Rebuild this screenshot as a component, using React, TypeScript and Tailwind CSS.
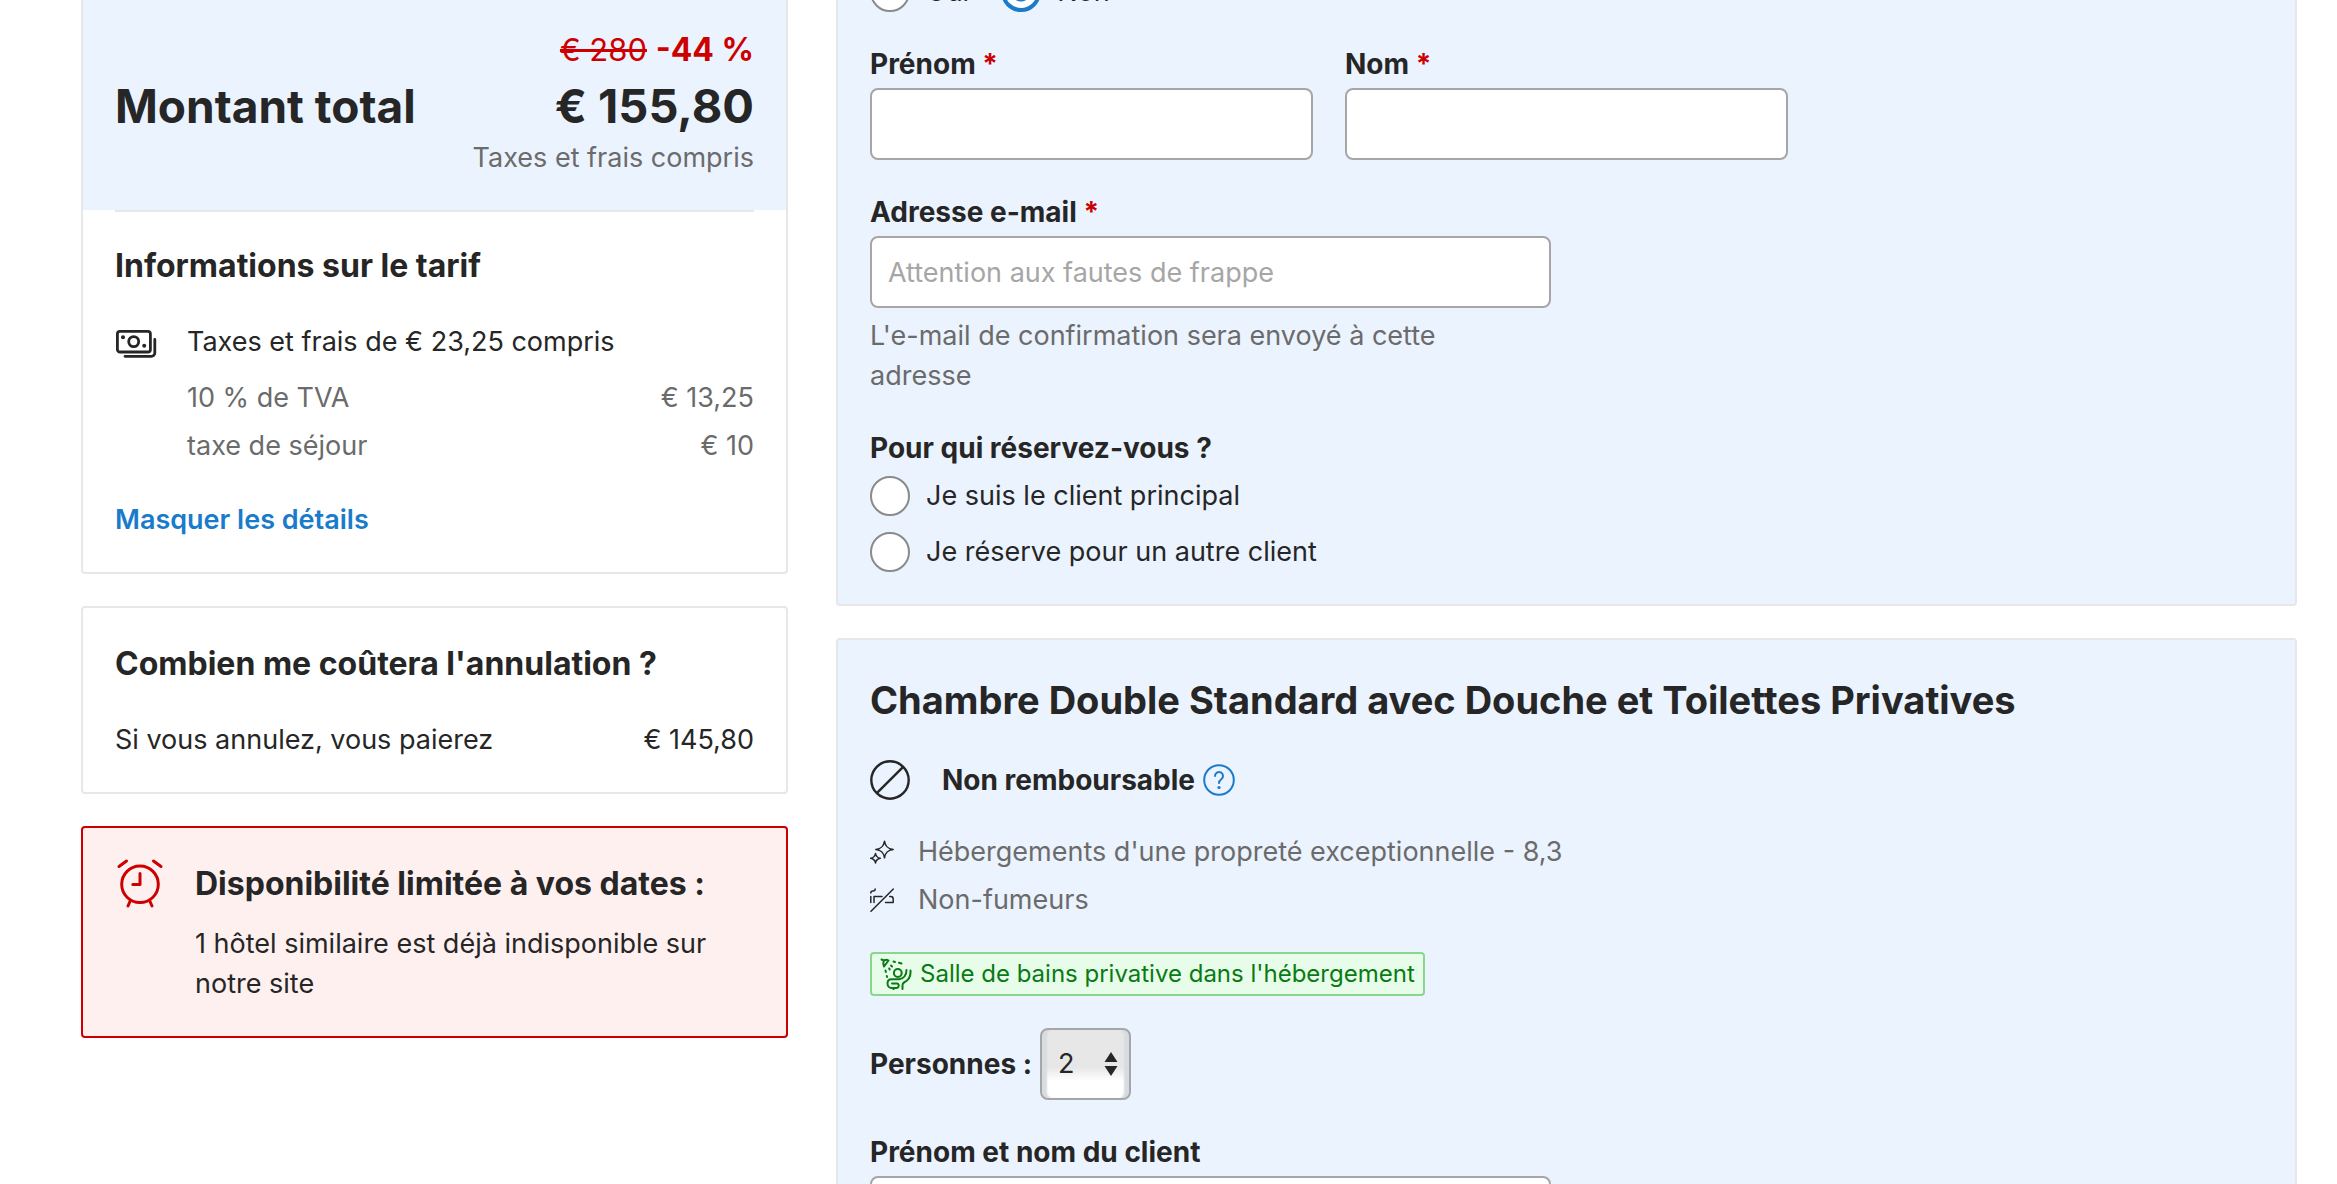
import { useState } from "react";
import type { ReactNode } from "react";

function MoneyIcon() {
    return (
        <svg className="size-10 shrink-0 overflow-visible" viewBox="0 0 40 40" fill="none" stroke="currentColor" strokeWidth="2.8" strokeLinecap="round" strokeLinejoin="round">
            <rect x="2.4" y="9.4" width="33" height="20.6" rx="2.6" />
            <circle cx="18.7" cy="19.6" r="5" />
            <path d="M39.8 17.5V31a3.3 3.3 0 0 1-3.3 3.3H10" />
            <circle cx="8" cy="15.2" r="2" fill="currentColor" stroke="none" />
            <circle cx="29.2" cy="23.8" r="2" fill="currentColor" stroke="none" />
        </svg>
    );
}

function AlarmIcon() {
    return (
        <svg className="size-12 shrink-0 overflow-visible" viewBox="0 0 48 48" fill="none" stroke="#cc0000" strokeWidth="3" strokeLinecap="round" strokeLinejoin="round">
            <circle cx="25" cy="24.3" r="18.3" />
            <path d="M25 13.500v11h-7.200M4 6.500l7.500-5.500M46 6.500l-7.500-5.500M15.200 41l-2.200 5M34.800 41l2.200 5" />
        </svg>
    );
}

function ForbiddenIcon() {
    return (
        <svg className="size-10 shrink-0" viewBox="0 0 40 40" fill="none" stroke="currentColor" strokeWidth="2.4">
            <circle cx="20" cy="20" r="18.700" />
            <path d="M33.200 6.800 6.800 33.200" />
        </svg>
    );
}

function HelpIcon() {
    return (
        <svg className="size-8" viewBox="0 0 32 32" fill="none" stroke="currentColor" strokeWidth="2" strokeLinecap="round" strokeLinejoin="round">
            <circle cx="16" cy="16" r="14.800" />
            <path d="M12 12a4 4 0 1 1 6.300 3.300c-1.400 1-2.300 1.900-2.300 3.700" />
            <circle cx="16" cy="23.500" r="1.600" fill="currentColor" stroke="none" />
        </svg>
    );
}

function SparkleIcon() {
    return (
        <svg className="size-6 shrink-0 text-[#262626]" viewBox="0 0 24 24" fill="none" stroke="currentColor" strokeWidth="1.500" strokeLinejoin="round">
            <path d="M14.500 1.200c.800 5.200 3 7.500 8.700 8.300-5.700.800-7.900 3-8.700 8.300-.800-5.300-3-7.500-8.700-8.300 5.700-.800 7.900-3.100 8.700-8.300Z" />
            <path d="M5.500 13.500c.500 3 1.700 4.200 4.700 4.800-3 .600-4.200 1.700-4.700 4.700-.500-3-1.800-4.100-4.800-4.700 3-.600 4.300-1.800 4.800-4.800Z" />
        </svg>
    );
}

function NoSmokingIcon() {
    return (
        <svg className="size-6 shrink-0 text-[#262626]" viewBox="0 0 24 24" fill="none" stroke="currentColor" strokeWidth="1.500" strokeLinecap="round" strokeLinejoin="round">
            <path d="M1 23.300 23.300 1M.800 8.500v6M4 14.500V8.500h8M15.500 14.500h7.700v-3.500c0-1.500-1-2.500-2.500-2.500h-1M.800 5c0-1.500 1-2 2.200-2s2.200-.600 2.200-2" />
        </svg>
    );
}

function ShowerIcon() {
    return (
        <svg className="size-8 shrink-0" viewBox="0 0 32 32" fill="none" stroke="currentColor" strokeWidth="2" strokeLinecap="round" strokeLinejoin="round">
            <path d="M1.500 1.500l3 1M4 8.500 8.500 2.500c-2-1.200-4.500-.600-5 1.200S3.200 7 4 8.500Z" />
            <path d="M13.500 3.500l1.500.500M19 4.800l2.500.700M11 7.500l1 1M5.500 12.500l.400 1.500M6.800 18l.300 1M9.200 10.500l.500 1" />
            <circle cx="17.800" cy="15" r="3.900" />
            <path d="M30.500 12.500c.500 6-2.500 10-6.500 12-1.200.600-1.500 1.500-1.500 3V31" />
            <path d="M26.500 12c0 4.500-2.500 8.500-7.500 9.300h-7.500c-3 0-4 2-4 4.200s1.500 4.500 4.200 4.500h4.300M12 25.500h5c2.500 0 2.300 5-1 4.500M13.500 30v1.300" />
        </svg>
    );
}

function Card({ className = "", children }: { className?: string; children: ReactNode }) {
    return <section className={`border-2 rounded-[4px] ${className}`}>{children}</section>;
}

type FieldProps = {
    id: string;
    label: string;
    required?: boolean;
    type?: string;
    placeholder?: string;
};

function Field({ id, label, required, type = "text", placeholder }: FieldProps) {
    return (
        <div>
            <label htmlFor={id} className="block mb-1 text-[28px] leading-10 font-bold">
                {label}
                {required && <span className="text-[#cc0000]"> *</span>}
            </label>
            <input
                id={id}
                type={type}
                placeholder={placeholder}
                className="block w-full h-[72px] px-4 bg-white border-2 border-[#a6a6a6] rounded-lg placeholder:text-[#a6a6a6]"
            />
        </div>
    );
}

type RadioProps = {
    name: string;
    label: string;
    checked: boolean;
    onChange: () => void;
};

function Radio({ name, label, checked, onChange }: RadioProps) {
    return (
        <label className="flex items-center gap-4">
            <input
                type="radio"
                name={name}
                checked={checked}
                onChange={onChange}
                className="appearance-none size-10 shrink-0 rounded-full bg-white border-2 border-[#8a8a8a] checked:border-4 checked:border-[#1a7bcb] checked:bg-[radial-gradient(circle,#1a7bcb_9px,#ffffff_10px)]"
            />
            {label}
        </label>
    );
}

function PriceCard() {
    const [open, setOpen] = useState(true);

    return (
        <Card className="border-[#e7e7e7] border-t-0 rounded-t-none">
            {/* Total */}
            <div className="px-8 pt-[26px] pb-8 bg-[#ebf3ff]">
                <p className="text-right text-[31px] leading-12 text-[#cc0000]">
                    <del>€ 280</del> <strong className="text-[32px]">-44 %</strong>
                </p>
                <div className="flex justify-between leading-16 font-bold">
                    <h2 className="text-[46px] leading-16">Montant total</h2>
                    <span className="text-[47px] leading-16">€ 155,80</span>
                </div>
                <p className="text-right text-[#6b6b6b]">Taxes et frais compris</p>
            </div>

            {/* Rate information */}
            <div className="px-8 pb-8">
                <hr className="border-t-2 border-[#e7e7e7]" />
                <h3 className="mt-[30px] mb-8 text-[32px] leading-12 font-bold">Informations sur le tarif</h3>
                <div className="flex gap-8">
                    <MoneyIcon />
                    <div className="flex-1">
                        <p>Taxes et frais de € 23,25 compris</p>
                        {open && (
                            <dl className="mt-4 space-y-2 text-[#6b6b6b]">
                                <div className="flex justify-between">
                                    <dt>10 % de TVA</dt>
                                    <dd>€ 13,25</dd>
                                </div>
                                <div className="flex justify-between">
                                    <dt>taxe de séjour</dt>
                                    <dd>€ 10</dd>
                                </div>
                            </dl>
                        )}
                    </div>
                </div>
                <button type="button" onClick={() => setOpen(!open)} className="block mt-[34px] font-semibold text-[#1a7bcb]">
                    Masquer les détails
                </button>
            </div>
        </Card>
    );
}

export default function App() {
    const [forWork, setForWork] = useState("non");
    const [guest, setGuest] = useState("");

    return (
        <div className="flex items-start gap-12 h-screen overflow-hidden pl-[81px] pr-10 bg-white font-['Inter',sans-serif] text-[27px] leading-10 text-[#262626]">
            <aside className="w-[707px] shrink-0 space-y-8">
                <PriceCard />

                {/* Cancellation cost */}
                <Card className="p-8 border-[#e7e7e7]">
                    <h3 className="mb-8 text-[32px] leading-12 font-bold">Combien me coûtera l'annulation ?</h3>
                    <div className="flex justify-between">
                        <span>Si vous annulez, vous paierez</span>
                        <span>€ 145,80</span>
                    </div>
                </Card>

                {/* Limited availability */}
                <Card className="flex gap-8 p-8 border-[#cc0000] bg-[#fff0f0]">
                    <AlarmIcon />
                    <div>
                        <h3 className="mb-4 text-[32px] leading-12 font-bold">Disponibilité limitée à vos dates :</h3>
                        <p>1 hôtel similaire est déjà indisponible sur notre site</p>
                    </div>
                </Card>
            </aside>

            <main className="flex-1 min-w-0 -mt-7 space-y-8">
                {/* Contact details */}
                <Card className="px-8 pb-8 border-t-0 rounded-t-none border-[#e7e7e7] bg-[#ebf3ff]">
                    <div className="flex gap-8 mb-8">
                        <Radio name="work" label="Oui" checked={forWork === "oui"} onChange={() => setForWork("oui")} />
                        <Radio name="work" label="Non" checked={forWork === "non"} onChange={() => setForWork("non")} />
                    </div>
                    <div className="grid grid-cols-3 gap-8 mb-8">
                        <Field id="firstname" label="Prénom" required />
                        <Field id="lastname" label="Nom" required />
                    </div>
                    <div className="grid grid-cols-2 gap-8 mb-8">
                        <div>
                            <Field id="email" label="Adresse e-mail" type="email" placeholder="Attention aux fautes de frappe" required />
                            <p className="mt-2 pr-8 text-[#6b6b6b]">L'e-mail de confirmation sera envoyé à cette adresse</p>
                        </div>
                    </div>
                    <fieldset>
                        <legend className="mb-2 text-[28px] leading-10 font-bold">Pour qui réservez-vous ?</legend>
                        <div className="space-y-4">
                            <Radio name="guest" label="Je suis le client principal" checked={guest === "me"} onChange={() => setGuest("me")} />
                            <Radio name="guest" label="Je réserve pour un autre client" checked={guest === "other"} onChange={() => setGuest("other")} />
                        </div>
                    </fieldset>
                </Card>

                {/* Room */}
                <Card className="p-8 border-[#e7e7e7] bg-[#ebf3ff]">
                    <h2 className="mb-8 text-[38px] leading-14 font-bold">Chambre Double Standard avec Douche et Toilettes Privatives</h2>
                    <div className="flex items-center mb-8 text-[28px] leading-10 font-bold">
                        <ForbiddenIcon />
                        <span className="ml-8 mr-2">Non remboursable</span>
                        <button type="button" aria-label="Non remboursable" className="text-[#1a7bcb]">
                            <HelpIcon />
                        </button>
                    </div>
                    <ul className="space-y-2 text-[#6b6b6b]">
                        <li className="flex items-center gap-6">
                            <SparkleIcon />
                            Hébergements d'une propreté exceptionnelle - 8,3
                        </li>
                        <li className="flex items-center gap-6">
                            <NoSmokingIcon />
                            Non-fumeurs
                        </li>
                    </ul>
                    <div className="flex w-fit h-11 items-center gap-2 my-8 px-2 border-2 border-[#8bd68f] rounded-[4px] bg-[#e7fde9] text-[24px] text-[#0a7a14]">
                        <ShowerIcon />
                        Salle de bains privative dans l'hébergement
                    </div>
                    <div className="flex items-center gap-2 mb-8">
                        <label htmlFor="guests" className="text-[28px] leading-10 font-bold">
                            Personnes :
                        </label>
                        <div className="relative">
                            <select
                                id="guests"
                                defaultValue="2"
                                className="block appearance-none w-[91px] h-[72px] pl-4 border-2 border-[#a6a6a6] rounded-lg bg-linear-to-b from-[#e7e7e7] from-55% to-white to-75% shadow-[inset_6px_0_2px_-1px_#d6dce1,inset_-6px_0_2px_-1px_#d6dce1]"
                            >
                                <option>1</option>
                                <option>2</option>
                            </select>
                            <svg className="absolute right-3 top-6 w-4 h-6 pointer-events-none" viewBox="0 0 16 24" fill="currentColor">
                                <path d="M8 0l6.500 10h-13zM8 24l6.500-10h-13z" />
                            </svg>
                        </div>
                    </div>
                    <div className="grid grid-cols-2 gap-8">
                        <Field id="guestname" label="Prénom et nom du client" />
                    </div>
                </Card>
            </main>
        </div>
    );
}
